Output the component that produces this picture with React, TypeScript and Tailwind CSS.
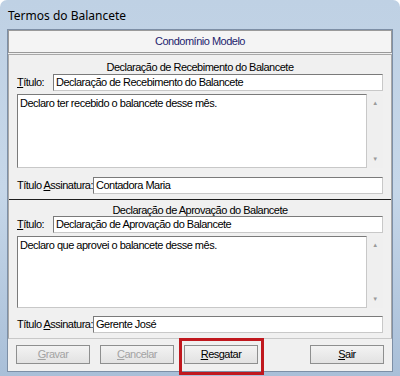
import React from "react";

// Windows 7 style dialog: "Termos do Balancete"

const font = "font-['Tahoma','Liberation_Sans','DejaVu_Sans',sans-serif]";

function Field({ value }: { value: string }) {
  return (
    <div className="flex h-[17px] flex-1 items-center border border-t-[#7a7a7a] border-l-[#7a7a7a] border-b-[#c8c8c8] border-r-[#c8c8c8] bg-white px-[2px] text-[11px] leading-none text-black">
      {value}
    </div>
  );
}

function Memo({ value, height }: { value: string; height: string }) {
  return (
    <div className={`flex ${height}`}>
      <div className="flex-1 border border-t-[#7a7a7a] border-l-[#7a7a7a] border-b-[#c8c8c8] border-r-[#c8c8c8] bg-white px-[2px] pt-[3px] text-[11px] leading-none text-black">
        {value}
      </div>
      <div className="flex w-[16px] flex-col items-center justify-between bg-[#efefef] py-[6px] text-[6px] leading-none text-[#9a9a9a]">
        <span>▲</span>
        <span>▼</span>
      </div>
    </div>
  );
}

function Section({
  heading,
  titulo,
  texto,
  assinatura,
  memoHeight,
  top,
}: {
  heading: string;
  titulo: string;
  texto: string;
  assinatura: string;
  memoHeight: string;
  top?: boolean;
}) {
  return (
    <div className={`flex flex-col px-[8px] pb-[5px] ${top ? "border-b border-b-[#1e1e1e]" : ""}`}>
      <div className={`${top ? "pt-[7px] pb-[1px]" : "pt-[5px]"} text-center text-[11px] leading-none text-black`}>
        {heading}
      </div>
      <div className="flex items-center">
        <span className="w-[36px] text-[11px] leading-none text-black">
          <span className="underline">T</span>ítulo:
        </span>
        <Field value={titulo} />
      </div>
      <div className="mt-[3px]">
        <Memo value={texto} height={memoHeight} />
      </div>
      <div className={`${top ? "mt-[9px]" : "mt-[8px]"} flex items-center`}>
        <span className="w-[76px] text-[11px] leading-none text-black">
          Título <span className="underline">A</span>ssinatura:
        </span>
        <Field value={assinatura} />
      </div>
    </div>
  );
}

function Btn({ u, rest, disabled }: { u: string; rest: string; disabled?: boolean }) {
  return (
    <div
      className={`flex h-[19px] w-[74px] items-center justify-center border border-[#8e8f8f] bg-gradient-to-b from-[#f3f3f3] to-[#e2e2e2] text-[11px] leading-none ${
        disabled ? "text-[#a3a3a3]" : "text-black"
      }`}
    >
      <span className="underline">{u}</span>
      {rest}
    </div>
  );
}

export default function App() {
  return (
    <div className={`h-[376px] w-[400px] overflow-hidden bg-white tracking-[-0.5px] ${font}`}>
      <div className="flex h-[376px] w-[400px] flex-col rounded-t-[7px] bg-gradient-to-b from-[#bfd1e4] via-[#c6d7e9] to-[#a9bfd8] px-[7px] pb-[4px]">
        <div className="flex h-[29px] items-center pl-[1px] pt-[2px] font-['Noto_Sans','Liberation_Sans',sans-serif] text-[12px] tracking-normal text-black">
          Termos do Balancete
        </div>
        <div className="flex flex-1 flex-col border border-[#7d8fa6] bg-[#f0f0f0]">
          <div className="flex h-[23px] items-center justify-center border border-[#9a9a9a] bg-[#f4f4f4] text-[11px] leading-none text-[#1e1e6e]">
            Condomínio Modelo
          </div>
          <div className="mt-[1px] flex flex-col border-x border-t border-b border-x-[#a8a8a8] border-t-[#a8a8a8] border-b-[#c8c8c8]">
            <Section
              heading="Declaração de Recebimento do Balancete"
              titulo="Declaração de Recebimento do Balancete"
              texto="Declaro ter recebido o balancete desse mês."
              assinatura="Contadora Maria"
              memoHeight="h-[74px]"
              top
            />
            <Section
              heading="Declaração de Aprovação do Balancete"
              titulo="Declaração de Aprovação do Balancete"
              texto="Declaro que aprovei o balancete desse mês."
              assinatura="Gerente José"
              memoHeight="h-[72px]"
            />
          </div>
          <div className="flex items-center px-[8px] pt-[6px]">
            <Btn u="G" rest="ravar" disabled />
            <div className="w-[10px]" />
            <Btn u="C" rest="ancelar" disabled />
            <div className="w-[10px]" />
            <div className="relative">
              <Btn u="R" rest="esgatar" />
              <div className="absolute -left-[5px] -right-[6px] -top-[7px] -bottom-[11px] border-[3px] border-[#c0181e]" />
            </div>
            <div className="flex-1" />
            <Btn u="S" rest="air" />
          </div>
        </div>
      </div>
    </div>
  );
}
